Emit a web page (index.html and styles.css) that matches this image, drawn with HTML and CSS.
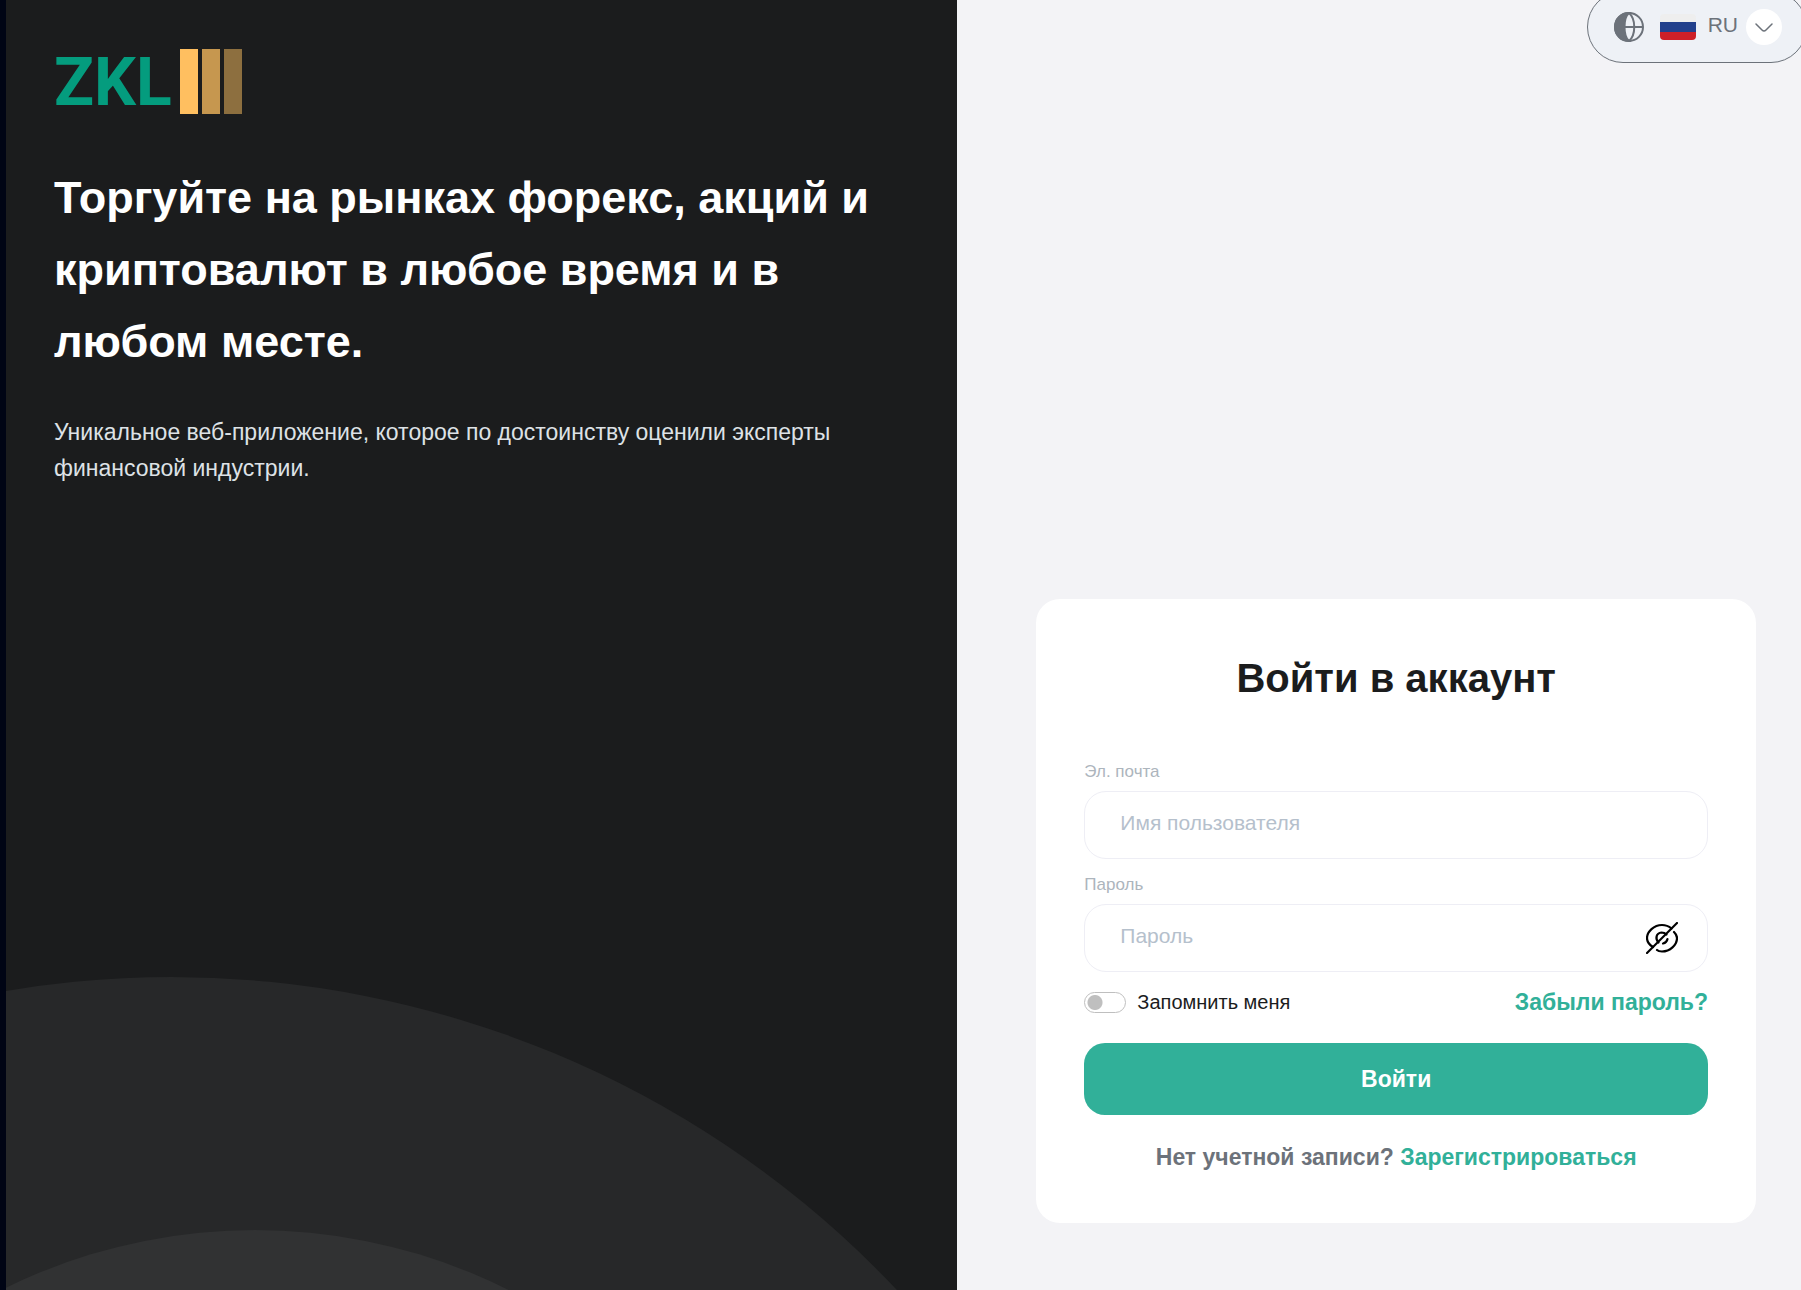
FILE: index.html
```
<!DOCTYPE html>
<html lang="ru">

<head>
    <meta charset="utf-8">
    <meta name="viewport" content="width=device-width, initial-scale=1">
    <link rel="stylesheet" href="styles.css">
    <title>Войти в аккаунт</title>
</head>

<body>
    <div class="page">
        <section class="promo">
            <svg class="circles" aria-hidden="true">
                <circle class="circle-big" cx="166" cy="996" r="996" />
                <circle class="circle-small" cx="249" cy="819" r="566" />
            </svg>

            <div class="logo">
                <span class="logo-text">ZKL</span>
                <svg class="logo-bars" width="62" height="65" viewBox="0 0 62 65" aria-hidden="true">
                    <rect x="0" width="18" height="65" fill="#ffbf60" />
                    <rect x="22" width="18" height="65" fill="#c6974f" />
                    <rect x="44" width="18" height="65" fill="#8d6f3f" />
                </svg>
            </div>

            <h1>Торгуйте на рынках форекс, акций и криптовалют в любое время и в любом месте.</h1>
            <p class="lead">Уникальное веб-приложение, которое по достоинству оценили эксперты финансовой индустрии.</p>
        </section>

        <main class="content">
            <button class="lang" type="button">
                <svg width="30" height="30" viewBox="0 0 30 30" fill="none" stroke="#6c727a" stroke-width="2" aria-hidden="true">
                    <path d="M15 1C7 1 1 7 1 15s6 14 14 14C9 24 9 6 15 1z" fill="#6c727a" />
                    <circle cx="15" cy="15" r="14" />
                    <path d="M15 1c7 6 7 22 0 28M10 15h19" />
                </svg>
                <svg class="flag" width="36" height="26" viewBox="0 0 36 26" aria-hidden="true">
                    <rect width="36" height="8" fill="#eeeeee" />
                    <rect y="8" width="36" height="10" fill="#22408c" />
                    <rect y="18" width="36" height="8" fill="#ce2028" />
                </svg>
                <span class="lang-code">RU</span>
                <span class="lang-arrow">
                    <svg width="18" height="9" viewBox="0 0 18 9" fill="none" stroke="#6c727a" stroke-width="1.5" stroke-linecap="round" aria-hidden="true">
                        <path d="M1 1l6 6q2 2 4 0l6-6" />
                    </svg>
                </span>
            </button>

            <form class="card">
                <h2>Войти в аккаунт</h2>

                <div class="field">
                    <label for="email">Эл. почта</label>
                    <input id="email" type="text" placeholder="Имя пользователя">
                </div>

                <div class="field">
                    <label for="password">Пароль</label>
                    <div class="password">
                        <input id="password" type="password" placeholder="Пароль">
                        <button class="eye" type="button" aria-label="Показать пароль">
                            <svg width="32" height="32" viewBox="0 0 32 32" fill="none" stroke="#000" stroke-width="2.2" stroke-linecap="round" aria-hidden="true">
                                <path d="M7 25C3.500 23 1 20 1 16C1 9.500 8 3 16 3C19.500 3 22.500 4 25.500 6.500" />
                                <path d="M28 10C30 12 31 14 31 16C31 23 24 29.500 16 29.500C14 29.500 12 29 11 28" />
                                <path d="M12.500 20.500C9 17 10 11 15.500 10.500C17.500 10.500 19 11 20.500 12.500" />
                                <path d="M21.500 17C21 19.500 19.500 21 17 21.500" />
                                <path d="M1 31L31 1" />
                            </svg>
                        </button>
                    </div>
                </div>

                <div class="options">
                    <label class="remember" for="remember">
                        <input id="remember" type="checkbox">
                        Запомнить меня
                    </label>
                    <a href="#">Забыли пароль?</a>
                </div>

                <button class="submit" type="submit">Войти</button>

                <p class="signup">Нет учетной записи? <a href="#">Зарегистрироваться</a></p>
            </form>
        </main>
    </div>
</body>

</html>
```
FILE: styles.css
```
* {
    box-sizing: border-box;
}

body {
    margin: 0;
    background: #f3f3f6;
    color: #1b1c1d;
    font-family: "Liberation Sans", Arial, sans-serif;
}

h1, h2, p {
    margin: 0;
}

button, input {
    font-family: inherit;
}

a {
    color: #31b099;
    font-weight: bold;
    text-decoration: none;
}

.page {
    display: grid;
    grid-template-columns: 53fr 47fr;
    min-height: 100vh;
    border-left: 6px solid #000414;
}

.promo {
    position: relative;
    overflow: hidden;
    padding: 48px;
    background: #1b1c1d;
    color: #fff;
}

/* the circles sit behind the text, along the bottom edge */
.circles {
    position: absolute;
    left: 0;
    bottom: 0;
    width: 100%;
    height: 313px;
}

.circle-big {
    fill: #272829;
}

.circle-small {
    fill: #313233;
}

.logo {
    display: flex;
    align-items: center;
    gap: 8px;
    height: 66px;
}

.logo-text {
    padding-top: 4px;
    color: #049c7e;
    font-family: Roboto, sans-serif;
    font-size: 66px;
    font-weight: 700;
    line-height: 66px;
}

h1 {
    position: relative;
    margin-top: 48px;
    font-size: 45px;
    line-height: 72px;
}

.lead {
    position: relative;
    margin-top: 36px;
    color: #dee2e6;
    font-size: 23px;
    line-height: 36px;
}

.content {
    display: flex;
    flex-direction: column;
    justify-content: space-between;
    padding: 0 45px 67px 79px;
}

.lang {
    display: flex;
    align-items: center;
    align-self: flex-end;
    gap: 8px;
    height: 72px;
    margin: -9px -51px 0 0;
    padding: 0 24px 0 26px;
    border: 1px solid #6c727a;
    border-radius: 36px;
    background: #eef1f6;
    color: #6c727a;
    font-size: 21px;
}

.lang-code {
    padding-bottom: 4px;
}

.flag {
    margin: 0 4px 0 8px;
    border-radius: 4px;
}

.lang-arrow {
    display: grid;
    place-items: center;
    width: 36px;
    height: 36px;
    border-radius: 50%;
    background: #fff;
}

.card {
    padding: 48px;
    border-radius: 24px;
    background: #fff;
}

h2 {
    margin-bottom: 48px;
    font-size: 40px;
    line-height: 63px;
    text-align: center;
}

.field {
    margin-bottom: 12px;
}

.field label {
    display: block;
    margin-bottom: 6px;
    color: #adb5bd;
    font-size: 17px;
    line-height: 27px;
}

.field input {
    display: block;
    width: 100%;
    height: 68px;
    padding: 0 35px 4px;
    border: 1px solid #eeeef5;
    border-radius: 22px;
    outline: none;
    background: #fff;
    color: #1b1c1d;
    font-size: 21px;
}

.field input::placeholder {
    color: #b5c0cc;
}

.password {
    position: relative;
}

.eye {
    position: absolute;
    top: 18px;
    right: 30px;
    padding: 0;
    border: 0;
    background: none;
    cursor: pointer;
}

.eye svg {
    display: block;
}

.options {
    display: flex;
    align-items: center;
    justify-content: space-between;
    margin-bottom: 23px;
    font-size: 23px;
    line-height: 36px;
}

.remember {
    display: flex;
    align-items: center;
    gap: 11px;
    font-size: 20px;
}

.remember input {
    appearance: none;
    width: 42px;
    height: 21px;
    margin: 0;
    border: 1px solid #bfbfbf;
    border-radius: 11px;
    background: radial-gradient(circle at 10px 50%, #bfbfbf 7px, transparent 8px);
}

.remember input:checked {
    border-color: #31b099;
    background: radial-gradient(circle at 30px 50%, #31b099 7px, transparent 8px);
}

.submit {
    display: block;
    width: 100%;
    height: 72px;
    border: 0;
    border-radius: 21px;
    background: #31b099;
    color: #fff;
    font-size: 23px;
    font-weight: bold;
    cursor: pointer;
}

.signup {
    margin-top: 24px;
    color: #6c727a;
    font-size: 23px;
    font-weight: bold;
    line-height: 36px;
    text-align: center;
}
```
